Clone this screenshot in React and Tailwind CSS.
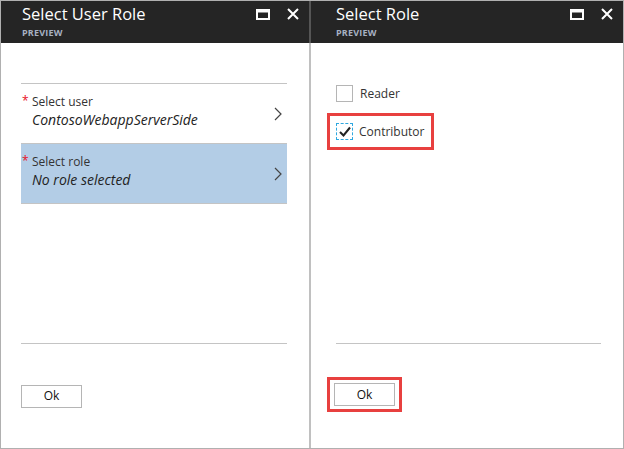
import React from 'react';

const font = { fontFamily: '"Open Sans", "Liberation Sans", sans-serif' };

const Header = ({ title, pl }) => (
  <div className={`h-[42px] bg-[#252525] flex items-start justify-between ${pl} pr-[10px]`}>
    <div className="pt-[2px]">
      <div className="text-white text-[16.5px] leading-[22px]">{title}</div>
      <div className="text-[#a7b1c2] text-[9px] font-bold leading-[12px] mt-[2px] tracking-[0.2px]">PREVIEW</div>
    </div>
    <div className="flex items-center gap-[17px] pt-[7px]">
      <svg width="14" height="11" viewBox="0 0 14 11">
        <rect x="1" y="1" width="12" height="9" fill="none" stroke="white" strokeWidth="2" />
        <rect x="1" y="1" width="12" height="2.5" fill="white" />
      </svg>
      <svg width="12" height="12" viewBox="0 0 12 12">
        <path d="M1 1 L11 11 M11 1 L1 11" stroke="white" strokeWidth="2" />
      </svg>
    </div>
  </div>
);

const Chevron = () => (
  <svg width="8" height="14" viewBox="0 0 8 14" className="shrink-0">
    <path d="M1 1 L7 7 L1 13" fill="none" stroke="#444" strokeWidth="1.2" />
  </svg>
);

const Row = ({ label, value, selected }) => (
  <div className={`h-[60px] flex items-center justify-between pr-[5px] border-b border-[#c4c4c4] ${selected ? 'bg-[#b3cde6]' : ''}`}>
    <div className="flex -mt-[3px]">
      <span className="text-[#e81123] text-[12px] leading-[14px] w-[11px] pl-[1px]">*</span>
      <div>
        <div className="text-[#333] text-[12px] leading-[16px]">{label}</div>
        <div className="text-[#222] text-[14px] italic leading-[20px]">{value}</div>
      </div>
    </div>
    <Chevron />
  </div>
);

const OkButton = () => (
  <button className="w-[61px] h-[23px] border border-[#b5b5b5] bg-white text-[12px] text-[#111] leading-none">Ok</button>
);

export default function App() {
  return (
    <div className="w-[624px] h-[449px] bg-white border border-[#b0b0b0] flex" style={font}>
      <div className="w-[308px] flex flex-col">
        <Header title="Select User Role" pl="pl-[21px]" />
        <div className="pl-[20px] pr-[22px] flex-1 flex flex-col">
          <div className="mt-[40px] border-t border-[#c4c4c4]">
            <Row label="Select user" value="ContosoWebappServerSide" />
            <Row label="Select role" value="No role selected" selected />
          </div>
          <div className="mt-[139px] border-t border-[#c4c4c4]" />
          <div className="mt-[38px]">
            <OkButton />
          </div>
        </div>
      </div>
      <div className="w-[2px] bg-[#c0c0c0] flex flex-col">
        <div className="h-[42px] bg-[#555]" />
      </div>
      <div className="flex-1 flex flex-col">
        <Header title="Select Role" pl="pl-[25px]" />
        <div className="pl-[16px] pr-[22px] flex-1 flex flex-col">
          <div className="mt-[42px] ml-[9px] flex items-center gap-[7px] h-[17px]">
            <div className="w-[17px] h-[17px] border border-[#b5b5b5] bg-white" />
            <span className="text-[12px] text-[#333]">Reader</span>
          </div>
          <div className="mt-[11px] w-[107px] h-[37px] border-[3px] border-[#e8403f] flex items-center pl-[6px] gap-[6px]">
            <div className="w-[17px] h-[17px] border border-dashed border-[#2ea8e0] flex items-center justify-center">
              <svg width="12" height="11" viewBox="0 0 12 11">
                <path d="M1 6 L4.5 9.5 L11 1.5" fill="none" stroke="#222" strokeWidth="2" />
              </svg>
            </div>
            <span className="text-[12px] text-[#333]">Contributor</span>
          </div>
          <div className="mt-[193px] ml-[9px] border-t border-[#c4c4c4]" />
          <div className="mt-[33px] w-[75px] h-[35px] border-[3px] border-[#e8403f] flex items-center justify-center">
            <OkButton />
          </div>
        </div>
      </div>
    </div>
  );
}
